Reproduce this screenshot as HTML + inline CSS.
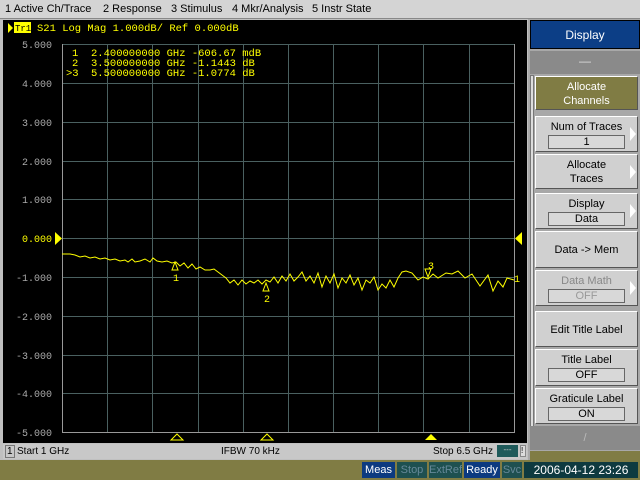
<!DOCTYPE html>
<html><head><style>
*{margin:0;padding:0;box-sizing:border-box}
body{width:640px;height:480px;background:#c0c0c0;font-family:"Liberation Sans",sans-serif;position:relative;overflow:hidden}
.menu{position:absolute;left:0;top:0;width:640px;height:19px;background:#d4d4d4;font-size:11px;color:#000;border-bottom:1px solid #888}
.menu span{position:absolute;top:3px}
.plot{position:absolute;left:3px;top:20px;width:524px;height:423px;background:#000}
.status{position:absolute;left:3px;top:444px;width:524px;height:15px;background:#c8c8c8;font-size:10px}
.bot{position:absolute;left:0;top:460px;width:640px;height:20px;background:#807c44}
.bx{position:absolute;top:462px;height:16px;font-size:11px;line-height:16px;text-align:center;color:#fff;overflow:hidden}
.rp{position:absolute;left:528px;top:19px;width:112px;height:441px;background:#a8a8a8}
.btn{position:absolute;left:535px;width:103px;background:#d0d0d0;border:1px solid #fff;border-right-color:#555;border-bottom-color:#555;font-size:11px;text-align:center;color:#000;line-height:14px}
.field{margin:1px auto 0;width:77px;height:14px;border:1px solid #666;background:#d8d8d8;line-height:12px}
.arr{position:absolute;right:1px;top:50%;margin-top:-7px;width:0;height:0;border-left:6px solid #fff;border-top:7px solid transparent;border-bottom:7px solid transparent}
</style></head><body>
<div class="menu"><span style="left:5px">1 Active Ch/Trace</span><span style="left:103px">2 Response</span><span style="left:171px">3 Stimulus</span><span style="left:232px">4 Mkr/Analysis</span><span style="left:312px">5 Instr State</span></div>
<div class="plot"></div>
<svg style="position:absolute;left:0;top:0" width="530" height="444">
<g stroke="#4a6060" stroke-width="1">
<line x1="62" y1="44.5" x2="514" y2="44.5"/><line x1="62" y1="83.5" x2="514" y2="83.5"/><line x1="62" y1="122.5" x2="514" y2="122.5"/><line x1="62" y1="161.5" x2="514" y2="161.5"/><line x1="62" y1="199.5" x2="514" y2="199.5"/><line x1="62" y1="238.5" x2="514" y2="238.5"/><line x1="62" y1="277.5" x2="514" y2="277.5"/><line x1="62" y1="316.5" x2="514" y2="316.5"/><line x1="62" y1="355.5" x2="514" y2="355.5"/><line x1="62" y1="393.5" x2="514" y2="393.5"/><line x1="62" y1="432.5" x2="514" y2="432.5"/>
<line x1="107.5" y1="44" x2="107.5" y2="433"/><line x1="152.5" y1="44" x2="152.5" y2="433"/><line x1="198.5" y1="44" x2="198.5" y2="433"/><line x1="243.5" y1="44" x2="243.5" y2="433"/><line x1="288.5" y1="44" x2="288.5" y2="433"/><line x1="333.5" y1="44" x2="333.5" y2="433"/><line x1="378.5" y1="44" x2="378.5" y2="433"/><line x1="423.5" y1="44" x2="423.5" y2="433"/><line x1="469.5" y1="44" x2="469.5" y2="433"/>
</g>
<g stroke="#999"><line x1="62.5" y1="44" x2="62.5" y2="433"/><line x1="514.5" y1="44" x2="514.5" y2="433"/><line x1="62" y1="432.5" x2="514" y2="432.5"/></g>
<g font-family="Liberation Mono,monospace" font-size="10" fill="#aaa" text-anchor="end">
<text x="52" y="48">5.000</text><text x="52" y="87">4.000</text><text x="52" y="126">3.000</text><text x="52" y="165">2.000</text><text x="52" y="203">1.000</text><text x="52" y="242" fill="#ff0">0.000</text><text x="52" y="281">-1.000</text><text x="52" y="320">-2.000</text><text x="52" y="359">-3.000</text><text x="52" y="397">-4.000</text><text x="52" y="436">-5.000</text>
</g>
<polygon points="55,232 55,245 62,238.5" fill="#ff0"/><polygon points="522,232 522,245 515,238.5" fill="#ff0"/>
<polygon points="8,23 8,33 13,28" fill="#ff0"/>
<rect x="14" y="22" width="17" height="11" fill="#ff0"/>
<g font-family="Liberation Mono,monospace" font-size="10.5" fill="#ff0">
<text x="15" y="31" fill="#000" font-size="9">Tr1</text>
<text x="37" y="31">S21 Log Mag 1.000dB/ Ref 0.000dB</text>
<text x="72" y="56">1</text><text x="91" y="56">2.400000000 GHz -606.67 mdB</text>
<text x="72" y="66">2</text><text x="91" y="66">3.500000000 GHz -1.1443 dB</text>
<text x="66" y="76">&gt;3</text><text x="91" y="76">5.500000000 GHz -1.0774 dB</text>
</g>
<polyline fill="none" stroke="#ff0" stroke-width="1" points="62,254 70,254 75,255 80,257 85,256 90,258 95,257 100,259 105,258 110,260 115,259 120,261 125,260 128,262 132,259 135,262 140,261 145,259 150,262 153,258 157,261 162,262 167,261 172,263 176,262 180,266 184,263 188,268 192,264 196,269 200,267 205,270 210,270 214,269 218,272 222,275 226,278 230,283 234,280 238,285 242,280 246,284 250,281 254,283 258,280 262,284 266,280 270,282 274,277 278,283 282,276 286,281 290,274 294,281 298,277 302,272 306,281 310,276 314,283 318,273 322,287 326,276 330,283 334,274 338,288 342,278 346,283 350,275 354,285 358,278 362,290 366,280 370,283 374,277 378,290 382,284 386,288 390,280 394,287 398,278 402,272 406,271 412,273 418,280 423,277 428,279 433,274 438,278 446,273 452,274 458,271 465,278 472,274 480,286 488,275 493,291 498,281 503,287 507,278 514,280"/>
<g fill="none" stroke="#ff0"><polygon points="175,262 172,270 178,270"/><polygon points="266,283 263,291 269,291"/><polygon points="428,277 425,269 431,269"/>
<polygon points="177,434 171,440 183,440"/><polygon points="267,434 261,440 273,440"/></g>
<polygon points="431,434 425,440 437,440" fill="#ff0"/>
<g font-family="Liberation Mono,monospace" font-size="10" fill="#ff0"><text x="173" y="281">1</text><text x="264" y="302">2</text><text x="428" y="269">3</text><text x="514" y="282">1</text></g>
</svg>
<div class="status"><span style="position:absolute;left:2px;top:1px;border:1px solid #777;padding:0 1px;line-height:11px">1</span><span style="position:absolute;left:14px;top:2px">Start 1 GHz</span><span style="position:absolute;left:218px;top:2px">IFBW 70 kHz</span><span style="position:absolute;left:430px;top:2px">Stop 6.5 GHz</span><span style="position:absolute;left:494px;top:1px;width:21px;height:12px;background:#1e5a5a;color:#ccc;font-size:8px;text-align:center">---</span><span style="position:absolute;left:517px;top:1px;width:6px;height:12px;background:#ddd;border:1px solid #888;font-size:8px">!</span></div>
<div class="bot"></div>
<div class="bx" style="left:362px;width:33px;background:#0c3a80">Meas</div>
<div class="bx" style="left:397px;width:30px;background:#1e5050;color:#689">Stop</div>
<div class="bx" style="left:429px;width:33px;background:#1e5050;color:#689">ExtRef</div>
<div class="bx" style="left:464px;width:36px;background:#0c3a80">Ready</div>
<div class="bx" style="left:502px;width:20px;background:#1e5050;color:#689">Svc</div>
<div class="bx" style="left:524px;width:114px;background:#0e3a40;font-size:12px">2006-04-12 23:26</div>
<div class="rp"></div>
<div style="position:absolute;left:530px;top:20px;width:110px;height:29px;background:#0c3e86;border:1px solid #000;color:#fff;font-size:12px;text-align:center;line-height:28px">Display</div>
<div style="position:absolute;left:530px;top:51px;width:110px;height:23px;background:#8a8a8a;color:#ddd;text-align:center;font-size:12px;line-height:20px">&#x2014;</div>
<div style="position:absolute;left:530px;top:75px;width:4px;height:368px;background:#ddd;border:1px solid #777"></div>
<div class="btn" style="top:76px;height:34px;background:#807c44;color:#fff;padding-top:3px">Allocate<br>Channels</div>
<div class="btn" style="top:116px;height:36px;padding-top:3px">Num of Traces<div class="field">1</div><div class="arr"></div></div>
<div class="btn" style="top:154px;height:35px;padding-top:3px">Allocate<br>Traces<div class="arr"></div></div>
<div class="btn" style="top:193px;height:36px;padding-top:3px">Display<div class="field">Data</div><div class="arr"></div></div>
<div class="btn" style="top:231px;height:37px;line-height:37px">Data -&gt; Mem</div>
<div class="btn" style="top:270px;height:36px;padding-top:3px;color:#888">Data Math<div class="field" style="color:#999">OFF</div><div class="arr"></div></div>
<div class="btn" style="top:311px;height:36px;line-height:36px">Edit Title Label</div>
<div class="btn" style="top:349px;height:37px;padding-top:3px">Title Label<div class="field">OFF</div></div>
<div class="btn" style="top:388px;height:36px;padding-top:3px">Graticule Label<div class="field">ON</div></div>
<div style="position:absolute;left:530px;top:426px;width:110px;height:24px;background:#8a8a8a;color:#bbb;text-align:center;font-size:11px;line-height:24px">/</div>
<div style="position:absolute;left:530px;top:451px;width:110px;height:9px;background:#807c44"></div>
</body></html>
